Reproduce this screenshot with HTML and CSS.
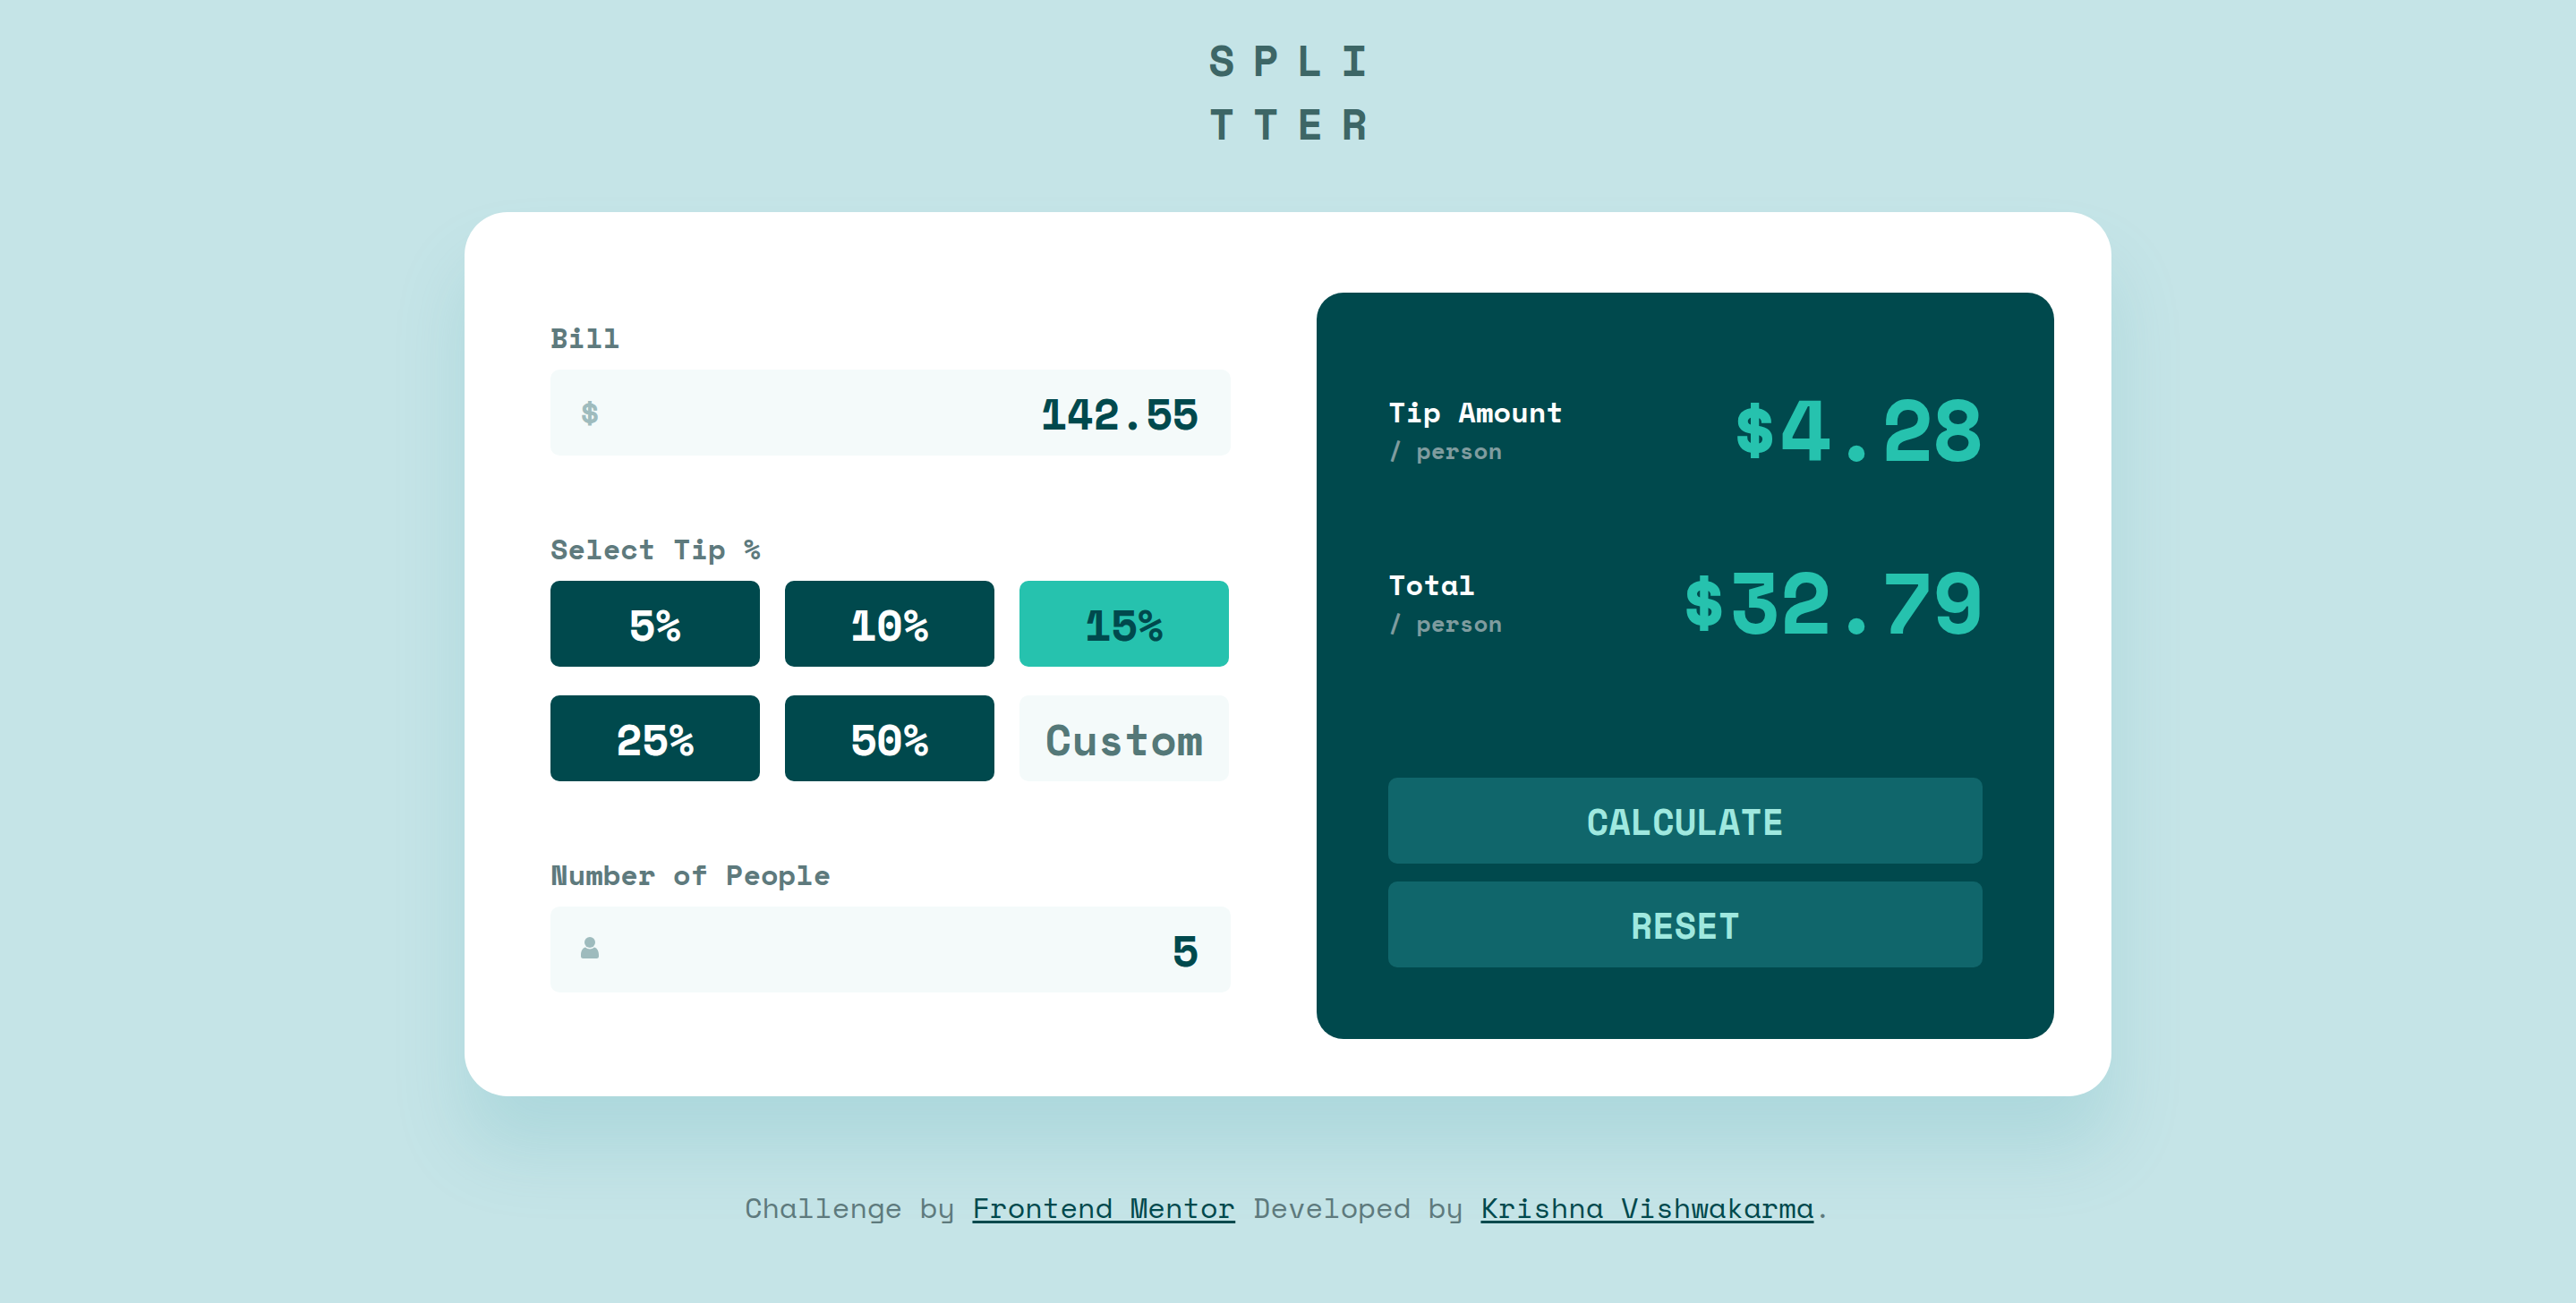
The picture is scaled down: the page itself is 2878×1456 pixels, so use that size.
FILE: index.html
```html
<!DOCTYPE html>
<html lang="en">
<head>
  <meta charset="utf-8">
  <meta name="viewport" content="width=device-width, initial-scale=1">
  <title>Splitter | Tip calculator</title>
  <link rel="stylesheet" href="styles.css">
</head>
<body>
  <h1 class="logo">SPLI<br>TTER</h1>

  <main class="card">
    <form class="inputs" id="tip-form">
      <div class="group">
        <label class="label" for="bill">Bill</label>
        <div class="field">
          <span class="field-sign" aria-hidden="true">$</span>
          <input class="field-input" id="bill" type="text" inputmode="decimal" value="142.55">
        </div>
      </div>

      <fieldset class="group">
        <legend class="label">Select Tip %</legend>
        <div class="tips">
          <button class="tip" type="button">5%</button>
          <button class="tip" type="button">10%</button>
          <button class="tip tip-selected" type="button" aria-pressed="true">15%</button>
          <button class="tip" type="button">25%</button>
          <button class="tip" type="button">50%</button>
          <input class="tip tip-custom" type="text" inputmode="decimal" placeholder="Custom" aria-label="Custom tip">
        </div>
      </fieldset>

      <div class="group">
        <label class="label" for="people">Number of People</label>
        <div class="field">
          <svg class="field-icon" viewBox="0 0 20 28" aria-hidden="true">
            <circle cx="10" cy="6" r="6"/>
            <path d="M5 11.500c1.300 1.300 3 2 5 2s3.700-.7 5-2c3.200.8 5 4.200 5 8.500v1.500c0 1.700-1 2.500-2.500 2.500h-15C1 24 0 23.200 0 21.500V20c0-4.300 1.800-7.700 5-8.500z"/>
          </svg>
          <input class="field-input" id="people" type="text" inputmode="numeric" value="5">
        </div>
      </div>
    </form>

    <section class="results" aria-label="Results">
      <div class="amounts">
        <div class="row">
          <h2 class="row-title">Tip Amount <small class="row-unit">/ person</small></h2>
          <output class="amount" form="tip-form">$4.28</output>
        </div>
        <div class="row">
          <h2 class="row-title">Total <small class="row-unit">/ person</small></h2>
          <output class="amount" form="tip-form">$32.79</output>
        </div>
      </div>
      <div class="actions">
        <button class="action" type="submit" form="tip-form">CALCULATE</button>
        <button class="action" type="reset" form="tip-form">RESET</button>
      </div>
    </section>
  </main>

  <footer class="credits">
    Challenge by <a class="link" href="https://www.frontendmentor.io">Frontend Mentor</a>
    Developed by <a class="link" href="#">Krishna Vishwakarma</a>.
  </footer>
</body>
</html>
```

FILE: styles.css
```css
:root {
  --dark: #00494d;
  --strong: #26c2ae;
  --muted: #5e7a7d;
  --pale: #f4fafa;
  --page: #c5e4e7;
}

* {
  box-sizing: border-box;
}

body {
  display: flex;
  flex-direction: column;
  align-items: center;
  min-height: 100vh;
  margin: 0;
  padding: 31px 32px;
  background: var(--page);
  color: var(--dark);
  font-family: "Space Mono", "DejaVu Sans Mono", monospace;
  font-size: 32px;
  line-height: 48px;
}

button,
input {
  min-width: 0;
  margin: 0;
  border: 0;
  font: inherit;
  font-weight: 700;
}

button {
  cursor: pointer;
}

.logo {
  margin: 0;
  padding-left: 20px;
  color: #3d6666;
  font-size: 48px;
  line-height: 71px;
  letter-spacing: 20px;
}

.card {
  display: grid;
  grid-template-columns: 760fr 824fr;
  gap: 96px;
  width: 100%;
  max-width: 1840px;
  margin-top: 64px;
  padding: 90px 64px 64px 96px;
  border-radius: 48px;
  background: #fff;
  box-shadow: 0 60px 80px rgba(80, 170, 180, 0.2);
}

.inputs {
  display: flex;
  flex-direction: column;
  gap: 80px;
  padding: 26px 0 52px;
}

.group {
  min-width: 0;
  margin: 0;
  padding: 0;
  border: 0;
}

.label {
  display: block;
  margin-bottom: 12px;
  padding: 0;
  color: var(--muted);
  font-weight: 700;
}

.field {
  display: flex;
  align-items: center;
  height: 96px;
  padding: 0 36px 0 32px;
  border-radius: 10px;
  background: var(--pale);
}

.field-sign {
  color: #9ebbbd;
  font-size: 40px;
  -webkit-text-stroke: 1px #9ebbbd;
}

.field-icon {
  flex: none;
  width: 20px;
  height: 28px;
  margin-left: 2px;
  fill: #9ebbbd;
}

.field-input {
  flex: 1;
  height: 96px;
  padding: 0;
  background: transparent;
  color: var(--dark);
  font-size: 48px;
  text-align: right;
}

.tips {
  display: grid;
  grid-template-columns: repeat(3, 1fr);
  gap: 32px 28px;
  padding-right: 2px;
}

.tip {
  height: 96px;
  padding: 2px 0 0;
  border-radius: 10px;
  background: var(--dark);
  color: #fff;
  font-size: 48px;
  text-align: center;
}

.tip-selected {
  background: var(--strong);
  color: var(--dark);
}

.tip-custom {
  padding: 0;
  background: var(--pale);
}

.tip-custom::placeholder {
  color: #547878;
  opacity: 1;
}

.results {
  display: flex;
  flex-direction: column;
  justify-content: space-between;
  padding: 80px;
  border-radius: 30px;
  background: var(--dark);
}

.amounts {
  display: grid;
  gap: 49px;
}

.row {
  display: flex;
  align-items: center;
  justify-content: space-between;
}

.row-title {
  margin: 0;
  color: #fff;
  font-size: 32px;
}

.row-unit {
  display: block;
  color: #7f9c9f;
  font-size: 26px;
  line-height: 38px;
}

.amount {
  color: var(--strong);
  font-size: 96px;
  font-weight: 700;
  line-height: 144px;
  letter-spacing: -2px;
}

.actions {
  display: grid;
  gap: 20px;
}

.action {
  height: 96px;
  padding: 2px 0 0;
  border-radius: 10px;
  background: #10666b;
  color: #9fe8df;
  font-size: 40px;
}

.credits {
  margin-top: 100px;
  color: var(--muted);
  text-align: center;
}

.link {
  color: var(--dark);
  text-decoration-thickness: 3px;
  text-underline-offset: 3px;
}
```
